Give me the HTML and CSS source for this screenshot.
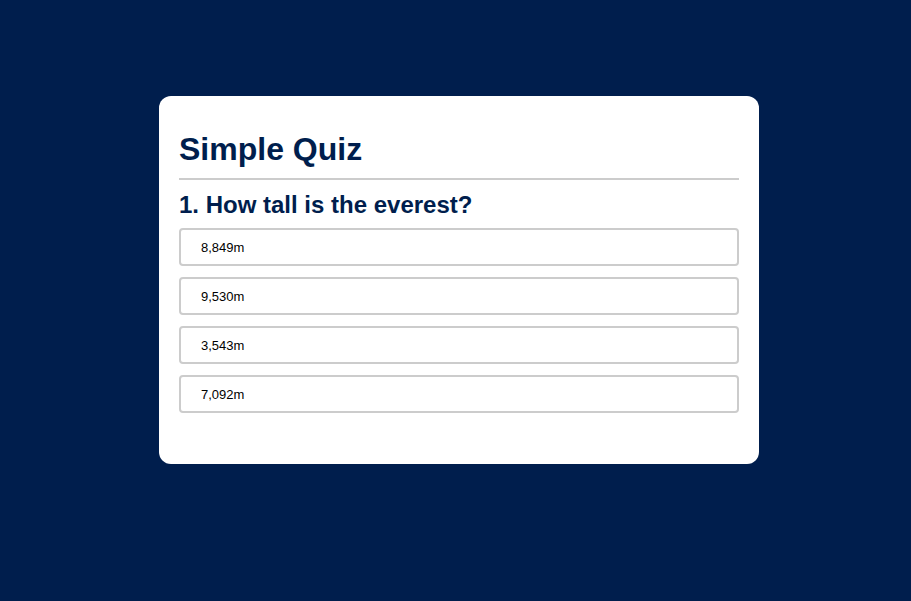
FILE: index.html
```html
<!DOCTYPE html>
<html>
<head>
<meta charset="utf-8">
<link rel="stylesheet" href="styles.css">
</head>
<body>
<div class="app">
  <h1 class="title">Simple Quiz</h1>
  <div class="quiz">
    <h2 class="question">1. How tall is the everest?</h2>
    <div class="answers">
      <button class="btn">8,849m</button>
      <button class="btn">9,530m</button>
      <button class="btn">3,543m</button>
      <button class="btn">7,092m</button>
    </div>
  </div>
</div>
</body>
</html>
```
FILE: styles.css
```css
* { box-sizing: border-box; }
body {
  margin: 0;
  padding: 96px 0 0 7px;
  background: #001e4d;
  font-family: "Liberation Sans", Arial, sans-serif;
  height: 601px;
}
.app {
  background: #fff;
  width: 600px;
  margin: 0 auto;
  border-radius: 12px;
  padding: 20px 20px 51px;
}
.title {
  margin: 0;
  font-size: 32px;
  font-weight: 700;
  color: #001e4d;
  padding: 15px 0 10px;
  line-height: 37px;
  border-bottom: 2px solid #cccccc;
}
.quiz { padding-top: 10px; }
.question {
  margin: 0 0 8px;
  font-size: 24px;
  line-height: 30px;
  font-weight: 700;
  color: #001e4d;
}
.answers { display: flex; flex-direction: column; gap: 11px; }
.btn {
  display: block;
  width: 100%;
  height: 38px;
  background: #fff;
  border: 2px solid #cccccc;
  border-radius: 4px;
  text-align: left;
  padding: 0 20px;
  font-family: "Liberation Sans", Arial, sans-serif;
  font-size: 13px;
  color: #000;
}
```
